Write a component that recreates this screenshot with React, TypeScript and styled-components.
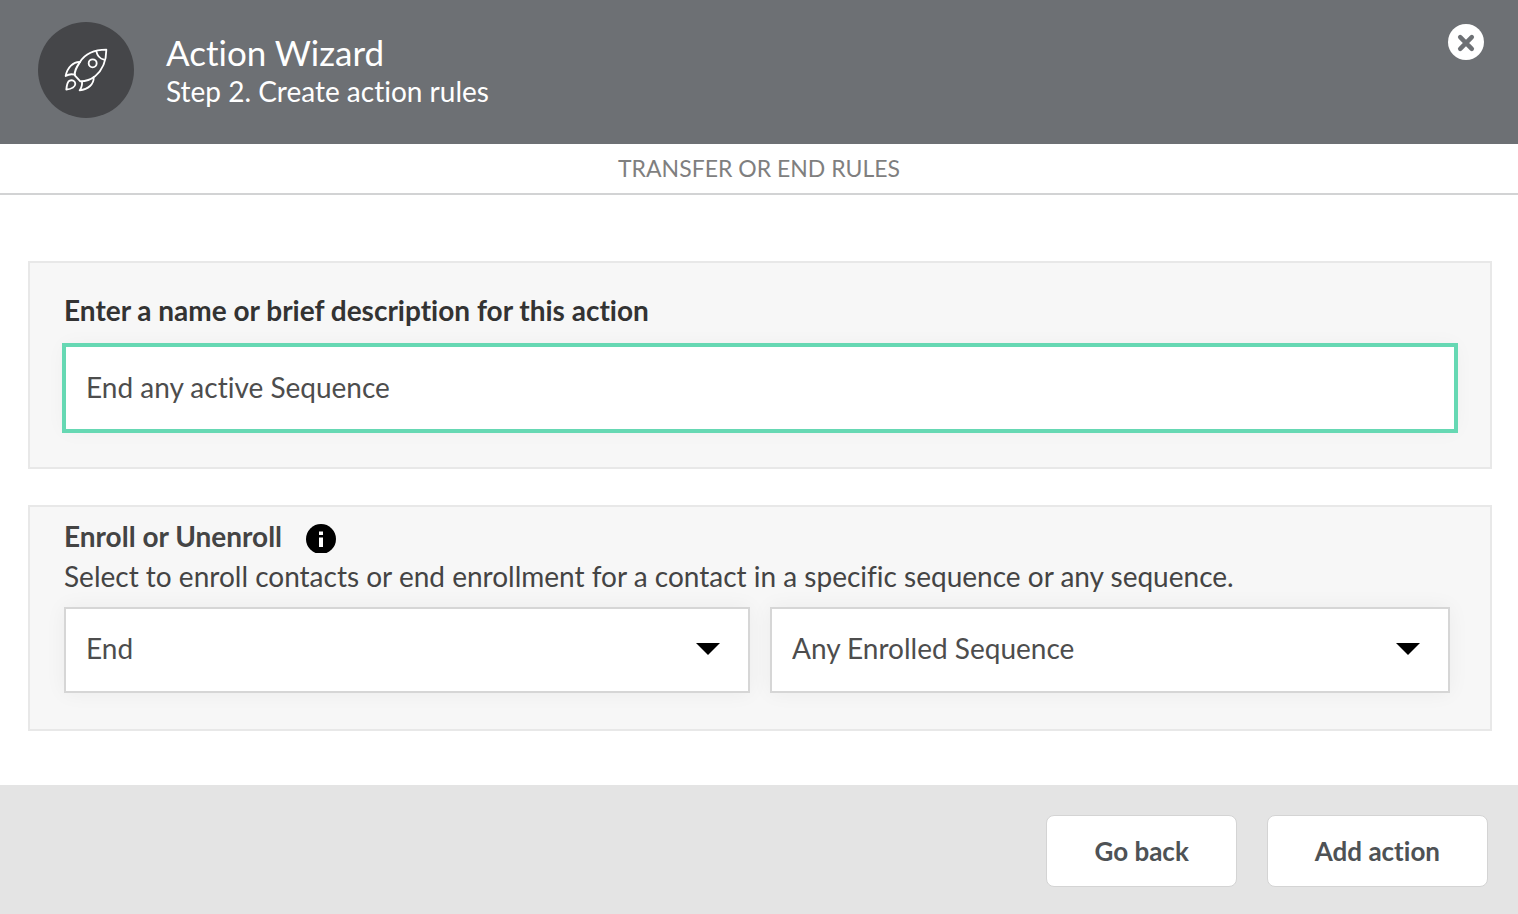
import React from "react";
import styled, { createGlobalStyle } from "styled-components";

const GlobalStyle = createGlobalStyle`
  *, *::before, *::after { box-sizing: border-box; }
  body {
    margin: 0;
    background: #fff;
    color: #444;
    font-family: Lato, "Open Sans", sans-serif;
    font-size: 28px;
    font-variant-ligatures: none;
  }
  button, input, select { font: inherit; color: inherit; font-variant-ligatures: none; }
`;

const Wizard = styled.div`
  display: flex;
  flex-direction: column;
  min-height: 100vh;
`;

const Header = styled.header`
  display: flex;
  align-items: flex-start;
  gap: 32px;
  padding: 22px 34px 26px 38px;
  background: #6d7074;
  color: #fff;
`;

const Badge = styled.div`
  display: flex;
  align-items: center;
  justify-content: center;
  flex: none;
  width: 96px;
  height: 96px;
  border-radius: 50%;
  background: #454649;
`;

const Heading = styled.div`
  flex: 1;
  padding-top: 8px;
`;

const Title = styled.h1`
  margin: 0;
  font-size: 35px;
  font-weight: 400;
  line-height: 44px;
`;

const Step = styled.p`
  margin: 0;
  font-size: 28px;
  line-height: 34px;
`;

const CloseButton = styled.button`
  display: flex;
  flex: none;
  width: 36px;
  height: 36px;
  margin-top: 2px;
  padding: 0;
  border: 0;
  border-radius: 50%;
  background: #fff;
  color: #6d7074;
  cursor: pointer;
`;

const SectionTitle = styled.h2`
  margin: 0;
  padding: 8px 0 9px;
  border-bottom: 2px solid #d2d3d4;
  color: #7f7f7f;
  font-size: 23px;
  font-weight: 400;
  line-height: 32px;
  text-align: center;
  text-transform: uppercase;
`;

const Content = styled.main`
  display: flex;
  flex: 1;
  flex-direction: column;
  gap: 36px;
  padding: 66px 26px 54px 28px;
`;

const Panel = styled.section<{ $top: number }>`
  padding: ${(p) => p.$top}px 34px 36px;
  border: 2px solid #e8e8e8;
  background: #f7f7f7;
`;

const FieldLabel = styled.label`
  display: block;
  margin-bottom: 18px;
  color: #333;
  font-weight: 700;
  line-height: 34px;
`;

const TextInput = styled.input`
  display: block;
  width: 100%;
  height: 86px;
  padding: 0 20px 2px;
  border: 2px solid #66d8b3;
  border-radius: 0;
  outline: 0;
  background: #fff;
  box-shadow: 0 0 0 2px #66d8b3, 0 0 20px rgba(0, 0, 0, 0.04);
  color: #4d4d4d;
`;

const GroupHeading = styled.div`
  display: flex;
  align-items: flex-start;
  gap: 24px;
`;

const GroupTitle = styled.h3`
  margin: 0;
  font-size: 28px;
  font-weight: 700;
  line-height: 34px;
`;

const InfoButton = styled.button`
  display: flex;
  margin-top: 5px;
  padding: 0;
  border: 0;
  background: none;
  color: #000;
`;

const Hint = styled.p`
  margin: 6px 0 14px;
  line-height: 34px;
`;

const SelectRow = styled.div`
  display: grid;
  grid-template-columns: 686fr 680fr;
  gap: 20px;
  padding-right: 6px;
`;

const SelectBox = styled.div`
  position: relative;
`;

const Select = styled.select`
  display: block;
  width: 100%;
  height: 86px;
  padding: 0 64px 4px 20px;
  border: 2px solid #d6d6d6;
  border-radius: 0;
  appearance: none;
  background: #fff;
  box-shadow: 0 0 20px rgba(0, 0, 0, 0.05);
  color: #4d4d4d;
`;

const Arrow = styled.svg`
  position: absolute;
  top: 36px;
  right: 30px;
  pointer-events: none;
`;

const Footer = styled.footer`
  display: flex;
  justify-content: flex-end;
  gap: 30px;
  padding: 30px 30px 27px;
  background: #e4e4e4;
`;

const FooterButton = styled.button`
  height: 72px;
  padding: 0 47px;
  border: 1px solid #d4d4d4;
  border-radius: 8px;
  background: #fff;
  color: #4e5255;
  font-size: 26px;
  font-weight: 700;
  cursor: pointer;
`;

function RocketIcon() {
  return (
    <svg
      width="48"
      height="48"
      viewBox="96 108 144 144"
      fill="none"
      stroke="#fff"
      strokeWidth="5.5"
      strokeLinejoin="round"
      strokeLinecap="round"
      aria-hidden="true"
    >
      <path d="M229 119C192 119 165 132 150 156C140 171 131 184 135 197L151 214C170 214 184 208 195 199C216 181 229 155 229 119Z" />
      <path d="M199 124C202 138 210 146 222 149" />
      <circle cx="188" cy="160" r="12" />
      <path d="M150 156C130 155 112 172 107 198C115 193 126 192 134 194" />
      <path d="M191 202C192 222 175 238 149 241C155 233 157 224 156 214" />
      <path d="M119 212C127 208 136 214 136 222C135 232 123 237 109 239C110 227 112 215 119 212Z" />
    </svg>
  );
}

function CloseIcon() {
  return (
    <svg width="36" height="36" viewBox="0 0 36 36" stroke="currentColor" strokeWidth="4.5" strokeLinecap="round" aria-hidden="true">
      <path d="M12.2 13.2L23.8 24.8M23.8 13.2L12.2 24.8" />
    </svg>
  );
}

function InfoIcon() {
  return (
    <svg width="30" height="29" viewBox="0 0 30 29" aria-hidden="true">
      <circle cx="15" cy="15" r="15" fill="currentColor" />
      <path d="M13 7.5h4v3.5h-4zM13 13.5h4v9.5h-4z" fill="#fff" />
    </svg>
  );
}

function SelectField({ label, options }: { label: string; options: string[] }) {
  return (
    <SelectBox>
      <Select aria-label={label}>
        {options.map((option) => (
          <option key={option}>{option}</option>
        ))}
      </Select>
      <Arrow width="24" height="12" viewBox="0 0 24 12" aria-hidden="true">
        <path d="M0 0H24L12 12Z" />
      </Arrow>
    </SelectBox>
  );
}

export default function App() {
  return (
    <>
      <GlobalStyle />
      <Wizard>
        <Header>
          <Badge>
            <RocketIcon />
          </Badge>
          <Heading>
            <Title>Action Wizard</Title>
            <Step>Step 2. Create action rules</Step>
          </Heading>
          <CloseButton type="button" aria-label="Close">
            <CloseIcon />
          </CloseButton>
        </Header>
        <SectionTitle>Transfer or end rules</SectionTitle>
        <Content>
          <Panel $top={30}>
            <FieldLabel htmlFor="action-name">Enter a name or brief description for this action</FieldLabel>
            <TextInput id="action-name" type="text" defaultValue="End any active Sequence" />
          </Panel>
          <Panel $top={12}>
            <GroupHeading>
              <GroupTitle>Enroll or Unenroll</GroupTitle>
              <InfoButton type="button" aria-label="More information">
                <InfoIcon />
              </InfoButton>
            </GroupHeading>
            <Hint>Select to enroll contacts or end enrollment for a contact in a specific sequence or any sequence.</Hint>
            <SelectRow>
              <SelectField label="Enrollment action" options={["End"]} />
              <SelectField label="Sequence" options={["Any Enrolled Sequence"]} />
            </SelectRow>
          </Panel>
        </Content>
        <Footer>
          <FooterButton type="button">Go back</FooterButton>
          <FooterButton type="button">Add action</FooterButton>
        </Footer>
      </Wizard>
    </>
  );
}
